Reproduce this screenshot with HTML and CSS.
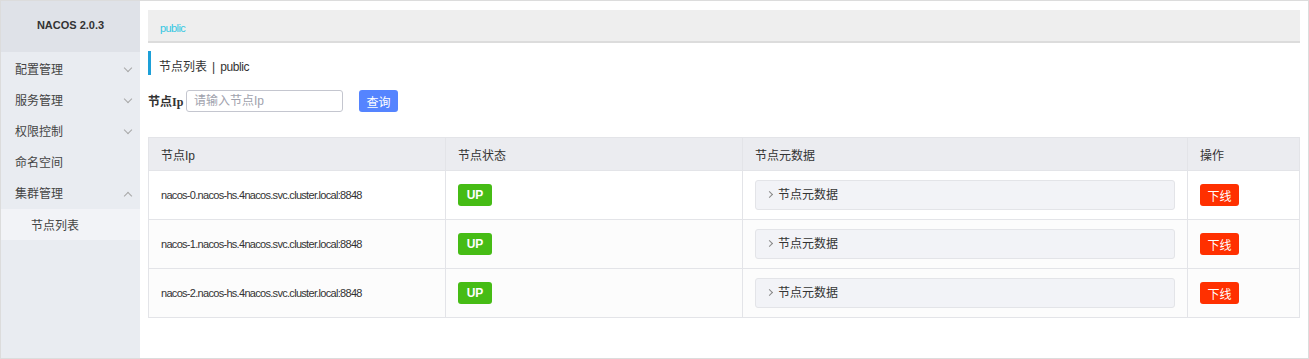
FILE: index.html
```html
<!DOCTYPE html>
<html lang="zh-CN">
  <head>
    <meta charset="UTF-8" />
    <meta name="viewport" content="width=device-width, initial-scale=1.0" />
    <title>Nacos - 节点列表</title>
    <link rel="stylesheet" href="styles.css">
  </head>
  <body>
    <div class="frame">
      <div class="sidebar">
        <div class="brand">NACOS 2.0.3</div>
        <ul class="menu">
          <li class="menu-item">配置管理 <span class="arrow down"></span></li>
          <li class="menu-item">服务管理 <span class="arrow down"></span></li>
          <li class="menu-item">权限控制 <span class="arrow down"></span></li>
          <li class="menu-item">命名空间</li>
          <li class="menu-item">集群管理 <span class="arrow up"></span></li>
          <li class="sub-item">节点列表</li>
        </ul>
      </div>

      <div class="main-content">
        <div class="namespace-bar">
          <a href="#" class="ns-link">public</a>
        </div>

        <div class="page-title">节点列表<span class="sep">|</span><span class="ns-name">public</span></div>

        <form class="search-row" onsubmit="return false">
          <label for="nodeIp">节点Ip</label>
          <input type="text" id="nodeIp" placeholder="请输入节点Ip" autocomplete="off" />
          <button type="button" class="btn-primary">查询</button>
        </form>

        <table class="node-table">
          <thead>
            <tr>
              <th class="col-ip">节点Ip</th>
              <th class="col-state">节点状态</th>
              <th class="col-meta">节点元数据</th>
              <th class="col-op">操作</th>
            </tr>
          </thead>
          <tbody>
            <tr>
              <td class="host">nacos-0.nacos-hs.4nacos.svc.cluster.local:8848</td>
              <td><span class="tag-up">UP</span></td>
              <td><div class="meta-box"><span class="caret"></span>节点元数据</div></td>
              <td><button type="button" class="btn-danger">下线</button></td>
            </tr>
            <tr>
              <td class="host">nacos-1.nacos-hs.4nacos.svc.cluster.local:8848</td>
              <td><span class="tag-up">UP</span></td>
              <td><div class="meta-box"><span class="caret"></span>节点元数据</div></td>
              <td><button type="button" class="btn-danger">下线</button></td>
            </tr>
            <tr>
              <td class="host">nacos-2.nacos-hs.4nacos.svc.cluster.local:8848</td>
              <td><span class="tag-up">UP</span></td>
              <td><div class="meta-box"><span class="caret"></span>节点元数据</div></td>
              <td><button type="button" class="btn-danger">下线</button></td>
            </tr>
          </tbody>
        </table>
      </div>
    </div>
  </body>
</html>
```

FILE: styles.css
```css
body {
  margin: 0;
  font-family: "Liberation Sans", "Noto Sans CJK SC", sans-serif;
  font-size: 12px;
  color: #333;
  background-color: white;
}

.frame {
  display: flex;
  height: 357px;
  border: 1px solid #dcdcdc;
}

.sidebar {
  width: 139px;
  flex-shrink: 0;
  background-color: #e9ecf1;
}

.brand {
  height: 51px;
  line-height: 49px;
  text-align: center;
  font-family: "Liberation Sans", sans-serif;
  font-weight: bold;
  font-size: 11px;
  color: #333;
  background-color: #dfe2e8;
}

.menu {
  list-style: none;
  margin: 0;
  padding: 2px 0 0 0;
}

.menu-item {
  position: relative;
  height: 31px;
  line-height: 32px;
  padding-left: 14px;
  color: #444;
}

.arrow {
  position: absolute;
  right: 9px;
  top: 11px;
  width: 5px;
  height: 5px;
  border-right: 1px solid #a8a8a8;
  border-bottom: 1px solid #a8a8a8;
}
.arrow.down {
  transform: rotate(45deg);
}
.arrow.up {
  top: 15px;
  transform: rotate(-135deg);
}

.sub-item {
  height: 31px;
  line-height: 34px;
  padding-left: 30px;
  background-color: #f2f3f7;
  color: #444;
}

.main-content {
  flex: 1;
  padding: 9px 8px 0 8px;
  min-width: 0;
}

.namespace-bar {
  height: 31px;
  line-height: 36px;
  padding-left: 12px;
  background-color: #eeeeee;
  border-bottom: 2px solid #dcdcdc;
}

.ns-link {
  color: #33c7e2;
  font-size: 11px;
  letter-spacing: -0.6px;
  text-decoration: none;
}

.page-title {
  margin-top: 8px;
  height: 24px;
  line-height: 32px;
  padding-left: 8px;
  border-left: 3px solid #1da0d8;
  font-size: 12px;
  color: #333;
}

.page-title .sep {
  margin: 0 5px;
}

.page-title .ns-name {
  letter-spacing: -0.4px;
}

.search-row {
  display: flex;
  align-items: center;
  margin: 15px 0 0 0;
}

.search-row label {
  font-family: "Liberation Serif", "Noto Sans CJK SC", serif;
  font-weight: bold;
  font-size: 12px;
  color: #333;
  width: 38px;
}

.search-row input {
  box-sizing: border-box;
  width: 157px;
  height: 22px;
  padding: 0 7px;
  border: 1px solid #c4c6cf;
  border-radius: 3px;
  font-family: "Liberation Sans", "Noto Sans CJK SC", sans-serif;
  font-size: 12px;
  outline: none;
}

.search-row input::placeholder {
  color: #a0a2ad;
}

.btn-primary {
  margin-left: 16px;
  width: 39px;
  height: 22px;
  padding: 0;
  border: none;
  border-radius: 3px;
  background-color: #5584ff;
  color: white;
  font-family: "Noto Sans CJK SC", sans-serif;
  font-size: 12px;
}

.node-table {
  margin-top: 25px;
  width: 100%;
  border-collapse: collapse;
  border: 1px solid #e3e4e8;
  table-layout: fixed;
}

.node-table th,
.node-table td {
  border: 1px solid #e3e4e8;
  padding: 0 12px;
  text-align: left;
}

.node-table th {
  height: 32px;
  font-weight: normal;
  background-color: #ebecf0;
  color: #333;
}

.node-table td {
  height: 48px;
  background-color: white;
}

.node-table td.host {
  font-size: 11px;
  letter-spacing: -0.7px;
}

.node-table tbody tr:nth-child(n+2) td {
  background-color: #fcfcfc;
}

.col-ip { width: 272px; }
.col-state { width: 272px; }
.col-meta { width: 420px; }

.tag-up {
  display: inline-block;
  width: 34px;
  height: 22px;
  line-height: 22px;
  text-align: center;
  border-radius: 3px;
  background-color: #46bc15;
  color: white;
  font-family: "Liberation Sans", sans-serif;
  font-weight: bold;
  font-size: 12px;
}

.meta-box {
  box-sizing: border-box;
  height: 30px;
  line-height: 29px;
  padding-left: 11px;
  border: 1px solid #e3e4e8;
  border-radius: 3px;
  background-color: #f2f3f7;
  font-size: 12px;
  color: #333;
}

.caret {
  display: inline-block;
  width: 4px;
  height: 4px;
  margin-right: 6px;
  vertical-align: 2px;
  border-right: 1px solid #888;
  border-top: 1px solid #888;
  transform: rotate(45deg);
}

.btn-danger {
  width: 39px;
  height: 22px;
  padding: 0;
  border: none;
  border-radius: 3px;
  background-color: #ff3000;
  color: white;
  font-family: "Noto Sans CJK SC", sans-serif;
  font-size: 12px;
}
```
